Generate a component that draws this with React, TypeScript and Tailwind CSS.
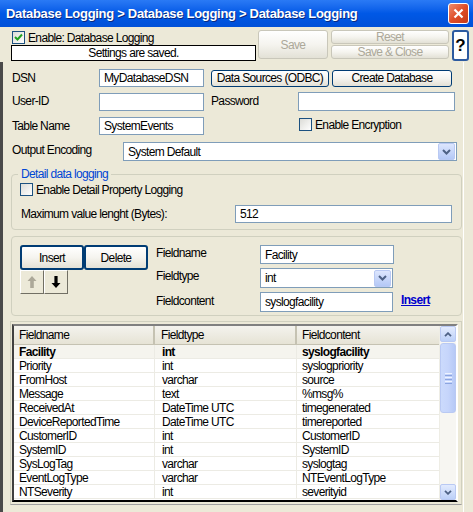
import React from "react";

const rows: [string, string, string][] = [
  ["Facility", "int", "syslogfacility"],
  ["Priority", "int", "syslogpriority"],
  ["FromHost", "varchar", "source"],
  ["Message", "text", "%msg%"],
  ["ReceivedAt", "DateTime UTC", "timegenerated"],
  ["DeviceReportedTime", "DateTime UTC", "timereported"],
  ["CustomerID", "int", "CustomerID"],
  ["SystemID", "int", "SystemID"],
  ["SysLogTag", "varchar", "syslogtag"],
  ["EventLogType", "varchar", "NTEventLogType"],
  ["NTSeverity", "int", "severityid"],
];

function Check({ checked }: { checked?: boolean }) {
  return (
    <span className="w-[13px] h-[13px] shrink-0 border border-[#1c5180] bg-gradient-to-br from-[#dcdcd7] to-white flex items-center justify-center">
      {checked && (
        <svg width="9" height="9" viewBox="0 0 9 9">
          <path d="M1 4 L3.5 6.5 L8 1.5" stroke="#21a121" strokeWidth="2" fill="none" />
        </svg>
      )}
    </span>
  );
}

function XpButton({ children, className = "", disabled }: { children: React.ReactNode; className?: string; disabled?: boolean }) {
  return (
    <div
      className={
        "flex items-center justify-center whitespace-nowrap rounded-[3px] border bg-gradient-to-b from-white via-[#f5f4ef] to-[#e3e1d6] " +
        (disabled ? "border-[#c9c7ba] text-[#aca899] " : "border-[#003c74] text-black ") +
        className
      }
    >
      {children}
    </div>
  );
}

function DropBtn() {
  return (
    <div className="w-[17px] h-[17px] rounded-[2px] border border-[#b9c9f3] bg-gradient-to-b from-[#dde6fd] to-[#b4c8f6] flex items-center justify-center">
      <svg width="9" height="6" viewBox="0 0 9 6">
        <path d="M1 1 L4.5 4.5 L8 1" stroke="#4d6185" strokeWidth="2" fill="none" />
      </svg>
    </div>
  );
}

function Input({ value, className = "" }: { value?: string; className?: string }) {
  return (
    <div className={"border border-[#7f9db9] bg-white flex items-center pl-[4px] " + className}>{value}</div>
  );
}

function ScrollArrow({ up }: { up?: boolean }) {
  return (
    <div className="w-[16px] h-[16px] rounded-[2px] border border-[#b9c9f3] bg-gradient-to-b from-[#e3ebfe] to-[#bcd0f8] flex items-center justify-center">
      <svg width="8" height="5" viewBox="0 0 8 5">
        <path d={up ? "M1 4.2 L4 1.2 L7 4.2" : "M1 0.8 L4 3.8 L7 0.8"} stroke="#4d6185" strokeWidth="1.8" fill="none" />
      </svg>
    </div>
  );
}

export default function App() {
  return (
    <div className="w-[473px] h-[512px] overflow-hidden bg-[#ece9d8] flex flex-col font-['Liberation_Sans',Arial,sans-serif] text-[12px] tracking-[-0.65px] text-black leading-none">
      {/* title bar */}
      <div className="h-[27px] shrink-0 bg-gradient-to-b from-[#2a7af5] via-[#0058e6] to-[#0050d8] flex items-center pl-[6px] pr-[4px]">
        <span className="text-white font-bold text-[13px] tracking-[-0.3px] [text-shadow:1px_1px_0_#0a2a80]">
          Database Logging &gt; Database Logging &gt; Database Logging
        </span>
        <div className="ml-auto w-[21px] h-[21px] rounded-[3px] border border-white bg-gradient-to-br from-[#ec8a6c] via-[#df4d27] to-[#c53b18] flex items-center justify-center">
          <svg width="11" height="11" viewBox="0 0 11 11">
            <path d="M1.5 1.5 L9.5 9.5 M9.5 1.5 L1.5 9.5" stroke="white" strokeWidth="2.2" />
          </svg>
        </div>
      </div>

      {/* toolbar */}
      <div className="h-[35px] shrink-0 flex pl-[11px] pt-[3px]">
        <div className="w-[245px] flex flex-col">
          <div className="h-[15px] flex items-center gap-[3px] pl-[1px]">
            <Check checked />
            <span>Enable: Database Logging</span>
          </div>
          <div className="h-[16px] border border-black bg-white flex items-center justify-center">Settings are saved.</div>
        </div>
        <XpButton disabled className="ml-[2px] w-[70px] h-[29px]">Save</XpButton>
        <div className="ml-[3px] w-[118px] flex flex-col gap-[1px]">
          <XpButton disabled className="h-[14px]">Reset</XpButton>
          <XpButton disabled className="h-[14px]">Save &amp; Close</XpButton>
        </div>
        <div className="ml-[3px] w-[17px] h-[31px] rounded-[3px] border-2 border-[#2c5aa0] bg-white flex items-center justify-center font-bold text-[17px] tracking-normal">?</div>
      </div>

      {/* content */}
      <div className="flex-1 flex flex-col border-l-[3px] border-l-[#4a4a4a] border-r border-r-white mr-[9px] pl-[9px] pr-[1px]">
        <div className="h-[18px] mt-[7px] flex items-center">
          <span className="w-[87px]">DSN</span>
          <Input value="MyDatabaseDSN" className="w-[105px] h-[18px]" />
          <XpButton className="ml-[7px] w-[118px] h-[17px]">Data Sources (ODBC)</XpButton>
          <XpButton className="ml-[3px] w-[120px] h-[17px]">Create Database</XpButton>
        </div>
        <div className="h-[19px] mt-[5px] flex items-start">
          <span className="w-[87px] mt-[3px]">User-ID</span>
          <Input className="w-[105px] h-[18px] mt-[1px]" />
          <span className="ml-[7px] w-[87px] mt-[3px]">Password</span>
          <Input className="w-[157px] h-[19px]" />
        </div>
        <div className="h-[18px] mt-[6px] flex items-center">
          <span className="w-[87px]">Table Name</span>
          <Input value="SystemEvents" className="w-[105px] h-[18px]" />
          <span className="ml-[95px] flex items-center gap-[3px] -mt-[3px]">
            <Check />
            <span>Enable Encryption</span>
          </span>
        </div>
        <div className="h-[19px] mt-[7px] flex items-center">
          <span className="w-[111px] -mt-[4px]">Output Encoding</span>
          <div className="w-[334px] h-[19px] border border-[#7f9db9] bg-white flex items-center pl-[4px] pr-[1px]">
            <span>System Default</span>
            <span className="ml-auto">
              <DropBtn />
            </span>
          </div>
        </div>

        {/* detail group */}
        <div className="relative mt-[13px] h-[56px] w-[451px] -ml-[1px] border border-[#d0d0bf] rounded-[4px] pl-[8px]">
          <span className="absolute -top-[7px] left-[6px] px-[3px] bg-[#ece9d8] text-[#0046d5]">Detail data logging</span>
          <div className="mt-[8px] h-[13px] flex items-center gap-[3px]">
            <Check />
            <span>Enable Detail Property Logging</span>
          </div>
          <div className="mt-[9px] h-[18px] flex items-center">
            <span className="w-[215px] pl-[1px]">Maximum value lenght (Bytes):</span>
            <Input value="512" className="w-[217px] h-[18px]" />
          </div>
        </div>

        {/* field editor group */}
        <div className="mt-[6px] h-[80px] w-[451px] -ml-[1px] border border-[#d0d0bf] rounded-[4px] flex pl-[8px] pt-[8px]">
          <div className="w-[136px] flex flex-col">
            <div className="flex">
              <XpButton className="w-[64px] h-[25px] border-2 border-[#1c2e4a] rounded-[3px]">Insert</XpButton>
              <XpButton className="w-[64px] h-[25px] border-2 border-[#1c2e4a] rounded-[3px]">Delete</XpButton>
            </div>
            <div className="flex">
              <div className="w-[24px] h-[24px] border border-t-white border-l-white border-r-[#716f64] border-b-[#716f64] bg-[#ece9d8] flex items-center justify-center">
                <svg width="10" height="14" viewBox="0 0 10 14">
                  <path d="M5 1 L9.5 6 L6.8 6 L6.8 13 L3.2 13 L3.2 6 L0.5 6 Z" fill="#aca899" />
                </svg>
              </div>
              <div className="w-[24px] h-[24px] border border-t-white border-l-white border-r-[#716f64] border-b-[#716f64] bg-[#ece9d8] flex items-center justify-center">
                <svg width="10" height="14" viewBox="0 0 10 14">
                  <path d="M5 13 L9.5 8 L6.6 8 L6.6 1 L3.4 1 L3.4 8 L0.5 8 Z" fill="#000" />
                </svg>
              </div>
            </div>
          </div>
          <div className="flex flex-col">
            <div className="h-[19px] flex items-center">
              <span className="w-[104px] -mt-[4px]">Fieldname</span>
              <Input value="Facility" className="w-[134px] h-[19px]" />
            </div>
            <div className="h-[20px] mt-[4px] flex items-center">
              <span className="w-[104px] -mt-[5px]">Fieldtype</span>
              <div className="w-[133px] h-[20px] border border-[#7f9db9] bg-white flex items-center pl-[4px] pr-[1px]">
                <span>int</span>
                <span className="ml-auto">
                  <DropBtn />
                </span>
              </div>
            </div>
            <div className="h-[20px] mt-[4px] flex items-center">
              <span className="w-[104px] -mt-[3px]">Fieldcontent</span>
              <Input value="syslogfacility" className="w-[133px] h-[20px]" />
              <span className="ml-[8px] -mt-[4px] text-[#0000cc] font-bold underline">Insert</span>
            </div>
          </div>
        </div>

        {/* table */}
        <div className="mt-[5px] w-[452px] -ml-[2px] h-[184px] border border-[#d0d0bf] border-b-[#a0a0a0] pl-[1px] pt-[2px] pr-[3px]">
          <div className="h-[178px] border-2 border-t-[#808080] border-l-[#404040] border-b-[#000] border-r-white bg-white flex">
            <div className="flex-1 flex flex-col">
              <div className="h-[19px] flex bg-gradient-to-b from-[#f4f3ee] to-[#e6e3d5] border-b border-[#c5c2b2]">
                <div className="w-[141px] pl-[5px] flex items-center border-r-2 border-r-[#c5c2b2]">Fieldname</div>
                <div className="w-[142px] pl-[6px] flex items-center border-r-2 border-r-[#c5c2b2]">Fieldtype</div>
                <div className="flex-1 pl-[5px] flex items-center">Fieldcontent</div>
              </div>
              {rows.map((r, i) => (
                <div
                  key={r[0]}
                  className={
                    "h-[14px] shrink-0 flex border-b border-[#ecebe4] " + (i === 0 ? "bg-[#f5f4ee] font-bold" : "bg-white")
                  }
                >
                  <div className="w-[141px] pl-[5px] flex items-center border-r border-[#ecebe4]">{r[0]}</div>
                  <div className="w-[142px] pl-[7px] flex items-center border-r border-[#ecebe4]">{r[1]}</div>
                  <div className="flex-1 pl-[5px] flex items-center">{r[2]}</div>
                </div>
              ))}
            </div>
            <div className="w-[17px] flex flex-col bg-[#f7f6f2] border-l border-[#eeede5]">
              <ScrollArrow up />
              <div className="h-[70px] mt-[1px] rounded-[3px] border border-[#b9c9f3] bg-gradient-to-r from-[#cbdafc] via-[#c6d5fb] to-[#b6c9f6] flex flex-col items-center justify-center gap-[1px]">
                <span className="w-[7px] h-[1px] bg-[#eef3ff]" />
                <span className="w-[7px] h-[1px] bg-[#8ca5e0]" />
                <span className="w-[7px] h-[1px] bg-[#eef3ff]" />
                <span className="w-[7px] h-[1px] bg-[#8ca5e0]" />
                <span className="w-[7px] h-[1px] bg-[#eef3ff]" />
                <span className="w-[7px] h-[1px] bg-[#8ca5e0]" />
              </div>
              <div className="flex-1" />
              <ScrollArrow />
            </div>
          </div>
        </div>
      </div>
    </div>
  );
}
